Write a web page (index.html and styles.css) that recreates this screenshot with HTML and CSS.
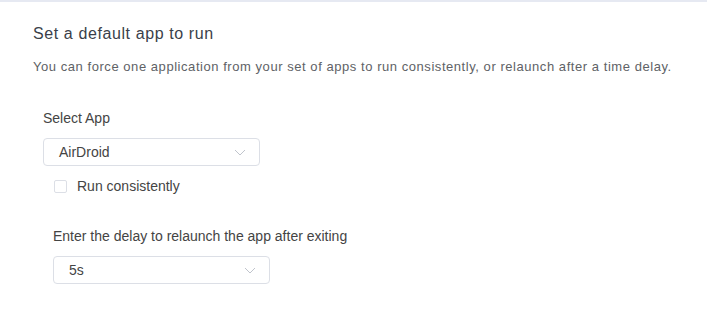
FILE: index.html
```html
<!DOCTYPE html>
<html lang="en">
<head>
    <meta charset="utf-8">
    <title>Default app</title>
    <link rel="stylesheet" href="styles.css">
</head>
<body>
    <div class="panel">
        <h2 class="title">Set a default app to run</h2>
        <p class="desc">You can force one application from your set of apps to run consistently, or relaunch after a time delay.</p>

        <div class="field">
            <div class="label">Select App</div>
            <div class="select">
                <span>AirDroid</span>
                <svg class="arrow" width="12" height="7" viewBox="0 0 12 7"><path d="M1 1l5 5 5-5" fill="none" stroke="#c0c4cc" stroke-width="1"/></svg>
            </div>
            <label class="check">
                <span class="box"></span>
                <span>Run consistently</span>
            </label>
        </div>

        <div class="field delay">
            <div class="label">Enter the delay to relaunch the app after exiting</div>
            <div class="select">
                <span>5s</span>
                <svg class="arrow" width="12" height="7" viewBox="0 0 12 7"><path d="M1 1l5 5 5-5" fill="none" stroke="#c0c4cc" stroke-width="1"/></svg>
            </div>
        </div>
    </div>
</body>
</html>
```

FILE: styles.css
```css
* {
    box-sizing: border-box;
}

body {
    margin: 0;
    background: #fff;
    font-family: 'Liberation Sans', Arial, sans-serif;
    color: #333;
}

.panel {
    border-top: 2px solid #e6e9f2;
    padding: 22px 33px 0;
    height: 318px;
}

.title {
    margin: 0;
    font-size: 16px;
    font-weight: normal;
    letter-spacing: 0.6px;
    color: #3a3f4a;
    line-height: 20px;
}

.desc {
    margin: 14px 0 0;
    font-size: 13px;
    letter-spacing: 0.55px;
    color: #606266;
    line-height: 18px;
}

.field {
    padding-left: 10px;
    margin-top: 32px;
}

.label {
    font-size: 14px;
    color: #444;
    line-height: 20px;
}

.select {
    display: flex;
    align-items: center;
    justify-content: space-between;
    width: 217px;
    height: 28px;
    margin-top: 10px;
    padding: 0 13px 0 15px;
    border: 1px solid #dcdfe6;
    border-radius: 4px;
    font-size: 14px;
    color: #444;
}

.check {
    display: flex;
    align-items: center;
    gap: 10px;
    margin-top: 12px;
    padding-left: 11px;
    font-size: 14px;
    color: #444;
}

.box {
    width: 13px;
    height: 13px;
    border: 1px solid #dcdfe6;
    border-radius: 2px;
}

.delay {
    margin-top: 32px;
    padding-left: 20px;
}
```
